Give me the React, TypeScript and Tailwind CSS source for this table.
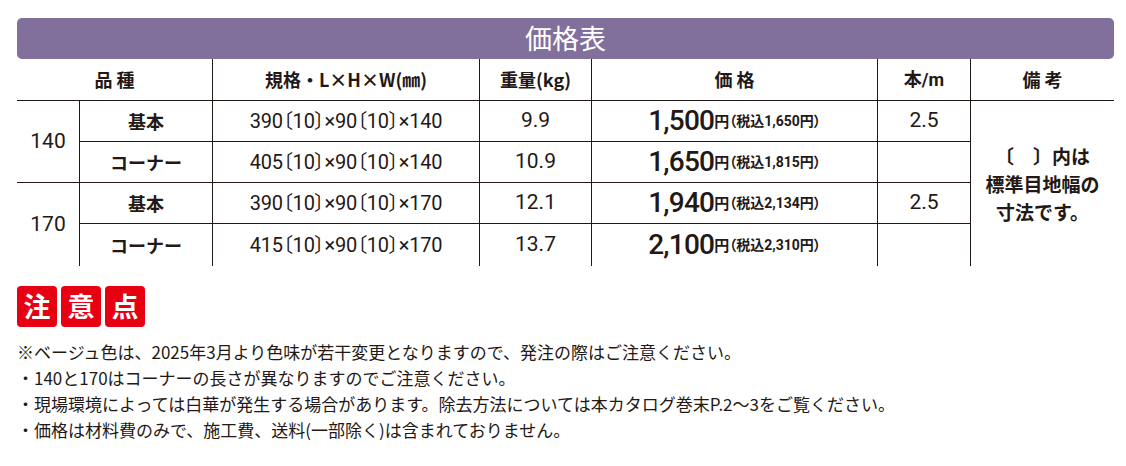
const jp = "font-['Noto_Sans_CJK_JP',sans-serif]";
const num = "font-['Roboto','Noto_Sans_CJK_JP',sans-serif]";

type Row = {
  type: string;
  spec: string;
  weight: string;
  price: string;
  tax: string;
  perM: string;
};

const groups: { size: string; rows: Row[] }[] = [
  {
    size: '140',
    rows: [
      { type: '基本', spec: '390〔10〕×90〔10〕×140', weight: '9.9', price: '1,500', tax: '1,650', perM: '2.5' },
      { type: 'コーナー', spec: '405〔10〕×90〔10〕×140', weight: '10.9', price: '1,650', tax: '1,815', perM: '' },
    ],
  },
  {
    size: '170',
    rows: [
      { type: '基本', spec: '390〔10〕×90〔10〕×170', weight: '12.1', price: '1,940', tax: '2,134', perM: '2.5' },
      { type: 'コーナー', spec: '415〔10〕×90〔10〕×170', weight: '13.7', price: '2,100', tax: '2,310', perM: '' },
    ],
  },
];

const notes = [
  '※ベージュ色は、2025年3月より色味が若干変更となりますので、発注の際はご注意ください。',
  '・140と170はコーナーの長さが異なりますのでご注意ください。',
  '・現場環境によっては白華が発生する場合があります。除去方法については本カタログ巻末P.2～3をご覧ください。',
  '・価格は材料費のみで、施工費、送料(一部除く)は含まれておりません。',
];

function HeadCell({ children, span, left = true }: { children: React.ReactNode; span?: boolean; left?: boolean }) {
  return (
    <div
      className={`${span ? 'col-span-2' : ''} ${left ? 'border-l' : ''} border-b border-[#231815] flex items-center justify-center text-[18px] font-bold ${jp}`}
    >
      {children}
    </div>
  );
}

export default function App() {
  const bodyRows: React.ReactNode[] = [];
  groups.forEach((g, gi) => {
    g.rows.forEach((r, ri) => {
      const last = gi === 1 && ri === 1;
      const line = last ? '' : 'border-b';
      const rowStart = gi * 2 + ri + 2;
      if (ri === 0) {
        bodyRows.push(
          <div
            key={`s${gi}`}
            style={{ gridRow: `${rowStart} / span 2`, gridColumn: '1' }}
            className={`${gi === 0 ? 'border-b' : ''} border-[#231815] flex items-center justify-center text-[21px] ${num}`}
          >
            {g.size}
          </div>
        );
      }
      const cell = `border-l ${line} border-[#231815] flex items-center justify-center`;
      bodyRows.push(
        <div key={`t${gi}${ri}`} style={{ gridRow: `${rowStart}`, gridColumn: '2' }} className={`${cell} text-[18px] font-bold ${jp}`}>
          {r.type}
        </div>,
        <div
          key={`p${gi}${ri}`}
          style={{ gridRow: `${rowStart}`, gridColumn: '3' }}
          className={`${cell} text-[20px] ${num} tracking-[-0.2px] [font-feature-settings:"palt"]`}
        >
          {r.spec}
        </div>,
        <div key={`w${gi}${ri}`} style={{ gridRow: `${rowStart}`, gridColumn: '4' }} className={`${cell} text-[21px] ${num}`}>
          {r.weight}
        </div>,
        <div key={`c${gi}${ri}`} style={{ gridRow: `${rowStart}`, gridColumn: '5' }} className={`${cell}`}>
          <span className={`text-[28px] font-medium tracking-[-0.8px] ${num}`}>{r.price}</span>
          <span className={`text-[15px] font-bold ${jp}`}>円</span>
          <span className={`text-[14px] font-bold ${num} [font-feature-settings:"palt"]`}>（税込{r.tax}円）</span>
        </div>,
        <div key={`m${gi}${ri}`} style={{ gridRow: `${rowStart}`, gridColumn: '6' }} className={`${cell} text-[21px] ${num}`}>
          {r.perM}
        </div>
      );
    });
  });

  return (
    <div className="w-[1126px] h-[466px] bg-white text-[#231815] pl-[17px] pr-[12px] pt-[18px]">
      <div className={`h-[41px] rounded-[5px] bg-[#816f9c] flex items-center justify-center text-white text-[27px] ${jp}`}>
        価格表
      </div>

      <div className="grid grid-cols-[62px_133px_267px_112px_286px_93px_144px] grid-rows-[42px_41px_41px_41px_42px]">
        <HeadCell span left={false}>
          品&nbsp;種
        </HeadCell>
        <HeadCell>規格・L×H×W(㎜)</HeadCell>
        <HeadCell>重量(kg)</HeadCell>
        <HeadCell>価&nbsp;格</HeadCell>
        <HeadCell>
          <span className={num}>本/m</span>
        </HeadCell>
        <HeadCell>備&nbsp;考</HeadCell>

        {bodyRows}

        <div
          style={{ gridRow: '2 / span 4', gridColumn: '7' }}
          className={`border-l border-[#231815] flex flex-col items-center justify-center text-[19px] font-bold leading-[28px] ${jp}`}
        >
          <div>〔　〕内は</div>
          <div>標準目地幅の</div>
          <div>寸法です。</div>
        </div>
      </div>

      <div className="mt-[20px] flex gap-[4px]">
        {['注', '意', '点'].map((c) => (
          <div
            key={c}
            className={`w-[40px] h-[41px] rounded-[4px] bg-[#e60012] text-white flex items-center justify-center text-[27px] font-bold ${jp}`}
          >
            {c}
          </div>
        ))}
      </div>

      <div className={`mt-[12px] text-[17px] leading-[26px] ${jp}`}>
        {notes.map((n) => (
          <p key={n}>{n}</p>
        ))}
      </div>
    </div>
  );
}
